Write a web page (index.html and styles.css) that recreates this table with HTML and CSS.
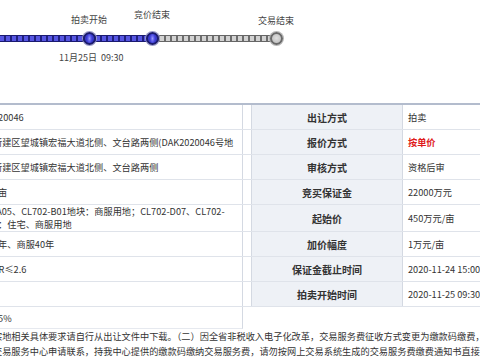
FILE: index.html
```html
<!DOCTYPE html>
<html lang="zh">
<head>
<meta charset="utf-8">
<title>拍卖信息</title>
<link rel="stylesheet" href="styles.css">
</head>
<body>
<div class="page">
  <div class="timeline">
    <div class="bar bar-done"></div>
    <div class="bar bar-todo"></div>
    <div class="node node-done n1"></div>
    <div class="node node-done n2"></div>
    <div class="node node-todo n3"></div>
    <div class="tl-label l1">拍卖开始</div>
    <div class="tl-label l2">竞价结束</div>
    <div class="tl-label l3">交易结束</div>
    <div class="tl-date">11月25日&nbsp;&nbsp;09:30</div>
  </div>

  <div class="info">
    <div class="row">
      <div class="cell left">020046</div><div class="gap"></div>
      <div class="cell label">出让方式</div><div class="cell value">拍卖</div>
    </div>
    <div class="row">
      <div class="cell left">新建区望城镇宏福大道北侧、文台路两侧(DAK2020046号地</div><div class="gap"></div>
      <div class="cell label">报价方式</div><div class="cell value red">按单价</div>
    </div>
    <div class="row">
      <div class="cell left">新建区望城镇宏福大道北侧、文台路两侧</div><div class="gap"></div>
      <div class="cell label">审核方式</div><div class="cell value">资格后审</div>
    </div>
    <div class="row">
      <div class="cell left">8亩</div><div class="gap"></div>
      <div class="cell label">竞买保证金</div><div class="cell value">22000万元</div>
    </div>
    <div class="row row-tall">
      <div class="cell left two">-A05、CL702-B01地块：商服用地；CL702-D07、CL702-<br>8：住宅、商服用地</div><div class="gap"></div>
      <div class="cell label">起始价</div><div class="cell value">450万元/亩</div>
    </div>
    <div class="row">
      <div class="cell left">0年、商服40年</div><div class="gap"></div>
      <div class="cell label">加价幅度</div><div class="cell value">1万元/亩</div>
    </div>
    <div class="row">
      <div class="cell left">AR≤2.6</div><div class="gap"></div>
      <div class="cell label">保证金截止时间</div><div class="cell value">2020-11-24 15:00:00</div>
    </div>
    <div class="row">
      <div class="cell left"></div><div class="gap"></div>
      <div class="cell label">拍卖开始时间</div><div class="cell value">2020-11-25 09:30:00</div>
    </div>
    <div class="row row-last">
      <div class="cell left">15%</div>
    </div>
  </div>

  <div class="notes">
    <p class="note-line">宗地相关具体要求请自行从出让文件中下载。（二）因全省非税收入电子化改革，交易服务费征收方式变更为缴款码缴费，请竞得人</p>
    <p class="note-line">交易服务中心申请联系，持我中心提供的缴款码缴纳交易服务费，请勿按网上交易系统生成的交易服务费缴费通知书直接缴费。</p>
  </div>
</div>
</body>
</html>
```

FILE: styles.css
```css
html, body {
  margin: 0;
  padding: 0;
  overflow: hidden;
  background: #fff;
}

body {
  width: 480px;
  height: 360px;
  font-family: "Noto Sans CJK SC", "Noto Sans", sans-serif;
  color: #333;
}

.page {
  margin-left: -12px;
  width: 760px;
}

/* ---------- timeline ---------- */
.timeline {
  position: relative;
  height: 103px;
}

.bar {
  position: absolute;
  top: 35px;
  height: 7px;
  box-sizing: border-box;
}

.bar-done {
  left: 0;
  width: 166px;
  border-top: 1px solid #1a1a72;
  border-bottom: 1px solid #1a1a72;
  background: repeating-linear-gradient(90deg, #5656e2 0 4px, #20207e 4px 6px);
}

.bar-todo {
  left: 166px;
  width: 122px;
  border-top: 1px solid #666;
  border-bottom: 1px solid #666;
  background: repeating-linear-gradient(90deg, #d2d2d2 0 4px, #6c6c6c 4px 6px);
}

.node {
  position: absolute;
  top: 32px;
  width: 13px;
  height: 13px;
  border-radius: 50%;
  box-sizing: border-box;
}

.node-done {
  border: 2px solid #1c1c6e;
  background: radial-gradient(ellipse 30% 60% at 50% 50%, #9a9aff 0, #5a5ae8 60%, #3a3ad0 100%);
  box-shadow: 0 0 0 1px #9a9ac8;
}

.node-todo {
  border: 2px solid #6a6a6a;
  background: radial-gradient(circle at 50% 45%, #e0e0e0 0, #c4c4c4 70%);
  box-shadow: 0 0 0 1px #b8b8b8;
}

.n1 { left: 95px; }
.n2 { left: 158px; }
.n3 { left: 282px; }

.tl-label {
  position: absolute;
  width: 60px;
  margin-left: -30px;
  text-align: center;
  font-size: 9px;
  line-height: 12px;
  color: #444;
  white-space: nowrap;
}

.l1 { left: 101px; top: 14px; }
.l2 { left: 164px; top: 9px; }
.l3 { left: 288px; top: 15px; }

.tl-date {
  position: absolute;
  left: 71px;
  top: 52px;
  width: 62px;
  text-align: center;
  font-size: 9px;
  line-height: 12px;
  color: #444;
  white-space: nowrap;
}

/* ---------- info table ---------- */
.info {
  border-top: 2px solid #b3bccd;
}

.row {
  display: grid;
  grid-template-columns: 255px 8px 152px 1fr;
  height: 25px;
  box-sizing: border-box;
  border-bottom: 1px solid #dfe3ea;
}

.row-tall {
  height: 27px;
}

.cell {
  display: flex;
  align-items: center;
  box-sizing: border-box;
  white-space: nowrap;
  overflow: hidden;
}

.left {
  padding-left: 5px;
  border-right: 1px solid #d4d9e2;
  font-size: 9.2px;
  color: #333;
}

.left.two {
  white-space: normal;
  line-height: 13px;
}

.gap {
  background: #fff;
}

.label {
  justify-content: center;
  background: #eef1f6;
  border-left: 1px solid #d4d9e2;
  border-right: 1px solid #d4d9e2;
  font-size: 10px;
  font-weight: bold;
  color: #333;
}

.value {
  padding-left: 5px;
  font-size: 9.2px;
  color: #333;
}

.red {
  color: #e01b1b;
  font-weight: bold;
}

.row-last {
  height: 22px;
  border-bottom: none;
}

.row-last .left {
  border-bottom: 1px solid #e6e9ef;
}

/* ---------- notes ---------- */
.notes {
  padding-left: 5px;
}

.note-line {
  margin: 0;
  font-size: 9.2px;
  line-height: 15px;
  color: #333;
  white-space: nowrap;
}
```
